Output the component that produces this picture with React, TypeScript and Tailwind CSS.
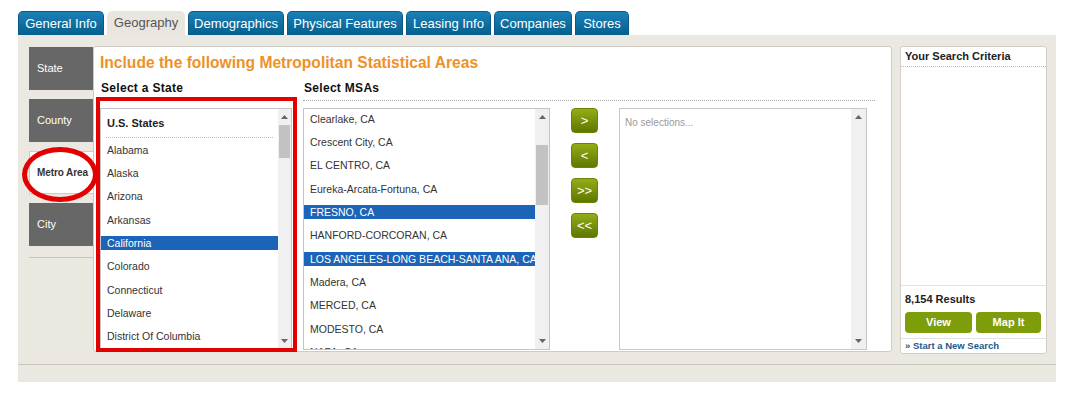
import React from "react";

const TABS = [
  { label: "General Info", w: "w-[86px]" },
  { label: "Geography", w: "w-[78px]", active: true },
  { label: "Demographics", w: "w-[96px]" },
  { label: "Physical Features", w: "w-[116px]" },
  { label: "Leasing Info", w: "w-[85px]" },
  { label: "Companies", w: "w-[78px]" },
  { label: "Stores", w: "w-[54px]" },
];

const SIDE = [
  { label: "State" },
  { label: "County" },
  { label: "Metro Area", active: true },
  { label: "City" },
];

const STATES = [
  "Alabama",
  "Alaska",
  "Arizona",
  "Arkansas",
  "California",
  "Colorado",
  "Connecticut",
  "Delaware",
  "District Of Columbia",
];

const MSAS = [
  "Clearlake, CA",
  "Crescent City, CA",
  "EL CENTRO, CA",
  "Eureka-Arcata-Fortuna, CA",
  "FRESNO, CA",
  "HANFORD-CORCORAN, CA",
  "LOS ANGELES-LONG BEACH-SANTA ANA, CA",
  "Madera, CA",
  "MERCED, CA",
  "MODESTO, CA",
  "NAPA, CA",
];

const SELECTED = ["California", "FRESNO, CA", "LOS ANGELES-LONG BEACH-SANTA ANA, CA"];

// tiny scrollbar arrow
const Arrow = ({ up }: { up?: boolean }) => (
  <svg width="7" height="4" viewBox="0 0 7 4" className="block">
    <path d={up ? "M0 4 L3.5 0 L7 4 Z" : "M0 0 L7 0 L3.5 4 Z"} fill="#666" />
  </svg>
);

const Scrollbar = ({ w, gap, thumb }: { w: string; gap: string; thumb?: string }) => (
  <div className={`${w} h-full bg-[#f0f0f0] flex flex-col items-center shrink-0`}>
    <div className="h-[16px] flex items-center justify-center">
      <Arrow up />
    </div>
    <div className={gap} />
    {thumb && <div className={`${thumb} w-[calc(100%-2px)] bg-[#c2c2c2]`} />}
    <div className="flex-1" />
    <div className="h-[16px] flex items-center justify-center">
      <Arrow />
    </div>
  </div>
);

const Row = ({ text }: { text: string }) => {
  const on = SELECTED.includes(text);
  return (
    <div className="h-[23.35px] flex items-center shrink-0">
      <div
        className={`h-[14px] w-full flex items-center pl-[6px] whitespace-nowrap overflow-hidden text-[10.5px] leading-[14px] ${
          on ? "bg-[#1c64b7] text-white" : "text-[#333]"
        }`}
      >
        {text}
      </div>
    </div>
  );
};

const MoveButton = ({ label }: { label: string }) => (
  <div className="w-[27px] h-[25px] rounded-[4px] bg-gradient-to-b from-[#93ad18] to-[#5e7800] border border-[#6b8404] flex items-center justify-center text-white text-[13px] leading-none">
    {label}
  </div>
);

export default function App() {
  return (
    <div className="relative w-[1071px] h-[393px] bg-white pt-[11px] pl-[18px] font-['Liberation_Sans',Arial,sans-serif] overflow-hidden">
      {/* Tabs */}
      <div className="flex gap-[3px] h-[24px]">
        {TABS.map((t) => (
          <div
            key={t.label}
            className={`${t.w} h-full rounded-t-[5px] flex items-center justify-center text-[13px] ${
              t.active
                ? "bg-[#e9e6df] text-[#555]"
                : "bg-gradient-to-b from-[#1b80b8] to-[#04608e] text-white border border-b-0 border-[#0a5a85]"
            }`}
          >
            {t.label}
          </div>
        ))}
      </div>

      {/* Beige container */}
      <div className="w-[1038px] h-[347px] bg-[#ebe8e1]">
        <div className="h-[330px] border-b border-[#cbc7bf] pt-[11px] pl-[11px] pr-[9px] flex">
          {/* Sidebar */}
          <div className="w-[64px] pt-[1px] flex flex-col gap-[9px] shrink-0">
            {SIDE.map((s) => (
              <div
                key={s.label}
                className={`h-[43px] flex items-center whitespace-nowrap ${
                  s.active
                    ? "bg-white text-[#333] font-bold border-t border-l border-b border-[#cfcbc3] pl-[7px] text-[10px] tracking-[-0.1px]"
                    : "bg-[#676767] text-white pl-[8px] text-[11px]"
                }`}
              >
                {s.label}
              </div>
            ))}
            <div className="mt-[2px] border-t border-[#c8c4bb]" />
          </div>

          {/* Main panel */}
          <div className="w-[799px] h-[306px] bg-white border border-[#cfcbc4] rounded-[3px] pl-[6px] pt-[7px] shrink-0">
            <div className="text-[15.6px] leading-[18px] font-bold text-[#ee9128]">
              Include the following Metropolitan Statistical Areas
            </div>
            <div className="mt-[9px] flex gap-[11px]">
              {/* State column */}
              <div className="w-[192px] shrink-0">
                <div className="h-[14px] text-[12px] leading-[14px] font-bold text-[#111] tracking-[0.3px] pl-[1px]">
                  Select a State
                </div>
                <div className="mt-[13px] h-[242px] border border-[#c4c4c4] flex overflow-hidden">
                  <div className="flex-1 flex flex-col overflow-hidden">
                    <div className="mx-[5px] h-[29px] shrink-0 border-b border-dotted border-[#bbb] flex items-center pl-[1px] text-[11px] font-bold text-[#222]">
                      U.S. States
                    </div>
                    {STATES.map((s) => (
                      <Row key={s} text={s} />
                    ))}
                  </div>
                  <Scrollbar w="w-[13px]" gap="h-0" thumb="h-[33px]" />
                </div>
              </div>

              {/* MSA column */}
              <div className="w-[572px] shrink-0">
                <div className="pb-[5px] border-b border-dotted border-[#aaa]">
                  <div className="h-[14px] text-[12px] leading-[14px] font-bold text-[#111] tracking-[0.3px] pl-[1px]">
                    Select MSAs
                  </div>
                </div>
                <div className="mt-[7px] flex">
                  <div className="w-[247px] h-[242px] border border-[#c4c4c4] flex overflow-hidden shrink-0">
                    <div className="flex-1 flex flex-col overflow-hidden">
                      <div className="-mt-[2px] flex flex-col">
                        {MSAS.map((m) => (
                          <Row key={m} text={m} />
                        ))}
                      </div>
                    </div>
                    <Scrollbar w="w-[14px]" gap="h-[20px]" thumb="h-[60px]" />
                  </div>
                  <div className="ml-[21px] flex flex-col gap-[10px] shrink-0">
                    <MoveButton label=">" />
                    <MoveButton label="<" />
                    <MoveButton label=">>" />
                    <MoveButton label="<<" />
                  </div>
                  <div className="ml-[21px] w-[248px] h-[242px] border border-[#c8c8c8] flex shrink-0">
                    <div className="flex-1 pl-[5px] pt-[8px] text-[10px] leading-[12px] text-[#999]">
                      No selections...
                    </div>
                    <Scrollbar w="w-[15px]" gap="h-0" />
                  </div>
                </div>
              </div>
            </div>
          </div>

          {/* Search criteria panel */}
          <div className="ml-[8px] w-[147px] h-[308px] bg-white border border-[#d3cfc7] rounded-[3px] flex flex-col shrink-0">
            <div className="h-[20px] border-b border-dotted border-[#bbb] flex items-center pl-[4px] text-[11px] font-bold text-[#222]">
              Your Search Criteria
            </div>
            <div className="flex-1" />
            <div className="border-t border-[#e2e2e2] px-[4px] pt-[5px] pb-[5px]">
              <div className="h-[16px] flex items-center text-[11px] font-bold text-[#222]">8,154 Results</div>
              <div className="mt-[5px] flex gap-[4px]">
                <div className="w-[67px] h-[21px] rounded-[4px] bg-[#7e9d0b] flex items-center justify-center text-white text-[11px] font-bold">
                  View
                </div>
                <div className="w-[65px] h-[21px] rounded-[4px] bg-[#7e9d0b] flex items-center justify-center text-white text-[11px] font-bold">
                  Map It
                </div>
              </div>
            </div>
            <div className="border-t border-[#e2e2e2] h-[15px] flex items-center pl-[4px] text-[9.5px] font-bold text-[#1d5a8c]">
              » Start a New Search
            </div>
          </div>
        </div>
      </div>

      {/* Red annotations */}
      <div className="absolute left-[96px] top-[97px] w-[201px] h-[255px] border-[4px] border-[#e30000] pointer-events-none" />
      <div className="absolute left-[22px] top-[147px] w-[76px] h-[55px] border-[5px] border-[#e30000] rounded-[50%] pointer-events-none" />
    </div>
  );
}
